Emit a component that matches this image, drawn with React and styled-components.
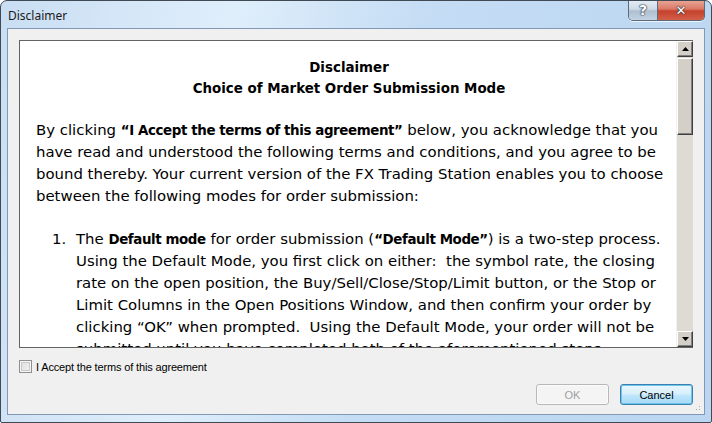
import React from 'react';
import styled, { createGlobalStyle } from 'styled-components';

const Global = createGlobalStyle`
  html, body {
    margin: 0;
    padding: 0;
    background: #ffffff;
  }
  * {
    box-sizing: border-box;
  }
`;

const Window = styled.div`
  position: relative;
  width: 712px;
  height: 423px;
  display: flex;
  flex-direction: column;
  border: 1px solid #3f4a55;
  border-radius: 7px 7px 2px 2px;
  background: linear-gradient(100deg, #c9def3 0%, #dfeefb 30%, #c4dcf4 55%, #bcd6f1 100%);
  overflow: hidden;
`;

const TitleBar = styled.div`
  height: 27px;
  flex: none;
  display: flex;
  align-items: flex-start;
`;

const Title = styled.div`
  padding: 7px 0 0 7px;
  font-family: 'Noto Sans', 'Liberation Sans', sans-serif;
  font-size: 12px;
  line-height: 15px;
  color: #1a1a1a;
`;

const CaptionButtons = styled.div`
  margin-left: auto;
  margin-right: 6px;
  margin-top: -1px;
  display: flex;
  border: 1px solid #5c6b7c;
  border-top: none;
  border-radius: 0 0 5px 5px;
  overflow: hidden;
  box-shadow: 0 1px 0 rgba(255, 255, 255, 0.7);
`;

const CaptionButton = styled.div`
  width: ${p => (p.$close ? 47 : 28)}px;
  height: 20px;
  display: flex;
  align-items: center;
  justify-content: center;
  font-family: 'DejaVu Sans', sans-serif;
  font-weight: bold;
  font-size: ${p => (p.$close ? 13 : 14)}px;
  color: #ffffff;
  text-shadow: 0 0 1px #2b3440, 0 0 1px #2b3440, 0 0 2px #2b3440;
  background: ${p =>
    p.$close
      ? 'linear-gradient(180deg, #e9a799 0%, #dc7a66 45%, #c5412b 55%, #d3604a 100%)'
      : 'linear-gradient(180deg, #e6eef6 0%, #cfdbe7 45%, #aebfd1 55%, #c3d3e3 100%)'};
  border-left: ${p => (p.$close ? '1px solid #5c6b7c' : 'none')};
`;

const Client = styled.div`
  position: relative;
  flex: 1;
  margin: 0 6px 7px 6px;
  border: 1px solid #8199b4;
  background: #f0f0f0;
  display: flex;
  flex-direction: column;
  padding: 11px 11px 0 11px;
`;

const ContentBox = styled.div`
  height: 308px;
  flex: none;
  display: flex;
  border: 1px solid #646464;
  border-right: none;
  background: #ffffff;
`;

const Doc = styled.div`
  flex: 1;
  overflow: hidden;
  padding: 16px 0 0 16px;
  font-family: 'DejaVu Sans', sans-serif;
  font-size: 14.9px;
  line-height: 22px;
  color: #000000;
  white-space: nowrap;
  b {
    font-family: 'DejaVu Sans Condensed', 'DejaVu Sans', sans-serif;
    letter-spacing: -0.4px;
  }
`;

const Heading = styled.div`
  text-align: center;
  font-family: 'DejaVu Sans Condensed', 'DejaVu Sans', sans-serif;
  font-weight: bold;
  line-height: 21px;
  padding-right: 14px;
`;

const Para = styled.p`
  margin: 20px 0 0 0;
`;

const List = styled.ol`
  margin: 21px 0 0 0;
  padding: 0 0 0 16px;
  list-style: none;
`;

const ListItem = styled.li`
  display: grid;
  grid-template-columns: 24px auto;
`;

const Num = styled.span``;

const Scrollbar = styled.div`
  width: 17px;
  flex: none;
  display: flex;
  flex-direction: column;
  background: #dedbd4;
  border-left: 1px solid #f2f1ee;
`;

const ScrollButton = styled.div`
  height: 16px;
  flex: none;
  display: flex;
  align-items: center;
  justify-content: center;
  background: #d4d0c8;
  border: 1px solid;
  border-color: #ffffff #404040 #404040 #ffffff;
  box-shadow: inset -1px -1px 0 #808080;
  svg {
    display: block;
  }
`;

const Thumb = styled.div`
  height: 77px;
  flex: none;
  margin-top: 1px;
  background: #d4d0c8;
  border: 1px solid;
  border-color: #ffffff #404040 #404040 #ffffff;
  box-shadow: inset -1px -1px 0 #808080;
`;

const Track = styled.div`
  flex: 1;
`;

const CheckRow = styled.label`
  display: flex;
  align-items: center;
  gap: 4px;
  margin-top: 11px;
  height: 15px;
  font-family: 'Liberation Sans', Arial, sans-serif;
  font-size: 11px;
  letter-spacing: -0.15px;
  color: #000000;
`;

const CheckBox = styled.span`
  width: 13px;
  height: 13px;
  flex: none;
  border: 1px solid #8f8f8f;
  background: linear-gradient(135deg, #dcdcdc 0%, #f4f4f4 100%);
  box-shadow: inset 0 0 0 1px #f6f6f6, inset 0 0 0 2px #c9c9c9;
`;

const ButtonRow = styled.div`
  display: flex;
  justify-content: flex-end;
  gap: 11px;
  margin-top: 10px;
`;

const Button = styled.button`
  width: 73px;
  height: 21px;
  padding: 0;
  font-family: 'Liberation Sans', Arial, sans-serif;
  font-size: 11px;
  border-radius: 3px;
  color: ${p => (p.disabled ? '#a0a0a0' : '#000000')};
  border: 1px solid ${p => (p.disabled ? '#b8b8b8' : '#3c7fb1')};
  background: ${p =>
    p.disabled
      ? '#f4f4f4'
      : 'linear-gradient(180deg, #eaf6fd 0%, #d9f0fc 45%, #bee6fd 55%, #a7d9f5 100%)'};
  box-shadow: ${p => (p.disabled ? 'inset 0 0 0 1px #fbfbfb' : 'inset 0 0 0 1px #6ec6ec')};
`;

const Grip = styled.div`
  position: absolute;
  right: 2px;
  bottom: 2px;
  width: 10px;
  height: 10px;
  background:
    radial-gradient(circle, #a8a8a8 0.8px, transparent 1px) 0 0 / 3px 3px;
  clip-path: polygon(100% 0, 100% 100%, 0 100%);
`;

const Arrow = ({ down }) => (
  <svg width="7" height="4" viewBox="0 0 7 4">
    <path d={down ? 'M0 0 H7 L3.5 4 Z' : 'M0 4 H7 L3.5 0 Z'} fill="#000" />
  </svg>
);

export default function App() {
  return (
    <>
      <Global />
      <Window>
        <TitleBar>
          <Title>Disclaimer</Title>
          <CaptionButtons>
            <CaptionButton>?</CaptionButton>
            <CaptionButton $close>✕</CaptionButton>
          </CaptionButtons>
        </TitleBar>
        <Client>
          <ContentBox>
            <Doc>
              <Heading>
                Disclaimer
                <br />
                Choice of Market Order Submission Mode
              </Heading>
              <Para>
                By clicking <b>“I Accept the terms of this agreement”</b> below, you acknowledge that you
                <br />
                have read and understood the following terms and conditions, and you agree to be
                <br />
                bound thereby. Your current version of the FX Trading Station enables you to choose
                <br />
                between the following modes for order submission:
              </Para>
              <List>
                <ListItem>
                  <Num>1.</Num>
                  <span>
                    The <b>Default mode</b> for order submission (<b>“Default Mode”</b>) is a two-step process.
                    <br />
                    Using the Default Mode, you first click on either:&nbsp; the symbol rate, the closing
                    <br />
                    rate on the open position, the Buy/Sell/Close/Stop/Limit button, or the Stop or
                    <br />
                    Limit Columns in the Open Positions Window, and then confirm your order by
                    <br />
                    clicking “OK” when prompted.&nbsp; Using the Default Mode, your order will not be
                    <br />
                    submitted until you have completed both of the aforementioned steps.
                  </span>
                </ListItem>
              </List>
            </Doc>
            <Scrollbar>
              <ScrollButton>
                <Arrow />
              </ScrollButton>
              <Thumb />
              <Track />
              <ScrollButton>
                <Arrow down />
              </ScrollButton>
            </Scrollbar>
          </ContentBox>
          <CheckRow>
            <CheckBox />
            I Accept the terms of this agreement
          </CheckRow>
          <ButtonRow>
            <Button disabled>OK</Button>
            <Button>Cancel</Button>
          </ButtonRow>
          <Grip />
        </Client>
      </Window>
    </>
  );
}
